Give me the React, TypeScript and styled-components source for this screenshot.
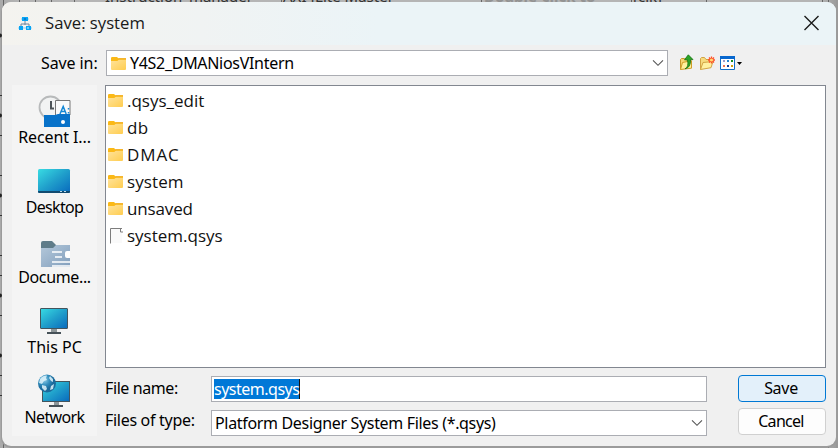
import React from 'react';
import styled, { createGlobalStyle } from 'styled-components';

const tahoma = '"Noto Sans", "DejaVu Sans", sans-serif';
const segoe = '"Open Sans", "Noto Sans", sans-serif';

const GlobalStyle = createGlobalStyle`
  * { box-sizing: border-box; }
  html, body { margin: 0; overflow: hidden; }
  svg { display: block; flex: none; }
`;

const Desktop = styled.div`
  position: relative;
  width: 838px;
  height: 448px;
  padding: 2px;
  overflow: hidden;
  background: linear-gradient(90deg, #a9a9a9 0, #b5b5b5 20px, #b5b5b5 820px, #999 100%);
`;
const Backdrop = styled.svg`
  position: absolute;
  left: 0;
  top: 0;
`;
const BackText = styled.span<{ $x: number; $faint?: boolean; $gap?: number }>`
  position: absolute;
  left: ${p => p.$x}px;
  top: -14px;
  font: ${p => (p.$faint ? 700 : 400)} 15px/20px ${tahoma};
  letter-spacing: ${p => p.$gap ?? 0}px;
  white-space: nowrap;
  color: ${p => (p.$faint ? '#929292' : '#333')};
`;
const Dialog = styled.main`
  position: relative;
  width: 834px;
  height: 444px;
  display: flex;
  flex-direction: column;
  overflow: hidden;
  border-radius: 9px;
  background: #f0f0f0;
  box-shadow: 0 1px 0 1px #9b9b9b;
`;
const TitleBar = styled.header`
  height: 43px;
  flex: none;
  display: flex;
  align-items: center;
  padding: 0 16px 0 15px;
  background: linear-gradient(90deg, #f4f3ef 0, #f0f3f3 24%, #ebf4f7 45%, #ebf4f7 100%);
`;
const Title = styled.h1`
  flex: 1;
  margin: 0 0 2px 12px;
  font: 400 16.7px/24px ${segoe};
  color: #191919;
`;
const LookIn = styled.div`
  height: 40px;
  flex: none;
  display: flex;
  align-items: flex-start;
  padding-top: 5px;
`;
const Text = styled.span<{ $gap?: number }>`
  font: 16px/22px ${tahoma};
  letter-spacing: ${p => p.$gap ?? 0}px;
  white-space: pre;
  color: #000;
`;
const LookLabel = styled.label`
  width: 104px;
  padding: 2px 0 0 39px;
  display: flex;
`;
const Field = styled.div<{ $width: number }>`
  width: ${p => p.$width}px;
  height: 26px;
  display: flex;
  align-items: center;
  border: 1px solid #abadb3;
  background: #fff;
`;
const Combo = styled(Field)<{ $inset: number }>`
  justify-content: space-between;
  padding: 0 3px 0 ${p => p.$inset}px;
`;
const ComboValue = styled.span`
  display: flex;
  align-items: center;
  gap: 4px;
`;
const Tools = styled.div`
  display: flex;
  align-items: center;
  height: 26px;
  margin-left: 11px;
  gap: 4px;
`;
const Content = styled.div`
  flex: 1;
  display: flex;
  align-items: flex-start;
`;
const Places = styled.nav`
  width: 85px;
  height: 351px;
  margin-left: 10px;
  background: #f4f4f4;
`;
const Place = styled.div`
  height: 70px;
  display: flex;
  flex-direction: column;
  align-items: center;
  padding-top: 9px;

  & > span { line-height: 20px; }
`;
const Main = styled.section`
  width: 722px;
  margin-left: 8px;
  display: flex;
  flex-direction: column;
`;
const FileList = styled.div`
  width: 721px;
  height: 283px;
  padding: 1px 0 0 2px;
  border: 1px solid #828790;
  background: #fff;
`;
const FileRow = styled.div`
  height: 27px;
  display: flex;
  align-items: center;
  gap: 4px;
`;
const FileName = styled.span<{ $gap?: number }>`
  font: 17px/25px ${segoe};
  letter-spacing: ${p => p.$gap ?? 0}px;
  color: #111;
`;
const Footer = styled.div`
  display: flex;
  justify-content: space-between;
  padding-top: 7px;
`;
const Fields = styled.div`
  display: flex;
  flex-direction: column;
  gap: 8px;
  padding-top: 1px;
`;
const FormRow = styled.div`
  display: flex;
`;
const FormLabel = styled.label<{ $lift?: boolean }>`
  width: 106px;
  height: 22px;
  padding-top: ${p => (p.$lift ? 0 : 1)}px;
  margin-top: ${p => (p.$lift ? -1 : 0)}px;
  display: flex;
`;
const Selected = styled.span`
  height: 20px;
  display: flex;
  align-items: center;
  margin-left: 2px;
  border-right: 1px solid #16120c;
  background: #0078d7;

  & > span { color: #fff; }
`;
const Buttons = styled.div`
  display: flex;
  flex-direction: column;
  gap: 6px;
  margin-right: 1px;
`;
const Button = styled.button<{ $primary?: boolean }>`
  width: 88px;
  height: 27px;
  display: flex;
  align-items: center;
  justify-content: center;
  padding: 0 2px 1px 0;
  border: 1px solid ${p => (p.$primary ? '#0078d4' : '#d0d0d0')};
  border-radius: 4px;
  background: ${p => (p.$primary ? '#e3f0fa' : '#fdfdfd')};
`;

const AppIcon = () => (
  <svg width="16" height="16" viewBox="0 0 16 16">
    <path d="M8 5v4M4 10V8h8v2" fill="none" stroke="#6f839b" />
    <path d="M4 3h1M11 3h1M1 12h14" stroke="#87cff5" />
    <path fill="#08a5f5" d="M5 1h6v4H5zM2 10h4v4H2zM9 10h5v4H9z" />
    <path fill="#087bd0" d="M7 2h2v2H7z" />
    <path fill="#65cbff" d="M10 11h2v2h-2z" />
  </svg>
);
const CloseIcon = () => (
  <svg width="16" height="18" viewBox="0 0 16 18">
    <path d="M.5 1l14 14M14.500 1l-14 14" stroke="#1b1b1b" strokeWidth="1.400" />
  </svg>
);
const Chevron = () => (
  <svg width="12" height="12" viewBox="0 0 12 12">
    <path d="M1 3.300l5 5 5-5" fill="none" stroke="#555" strokeWidth="1.100" />
  </svg>
);
const Folder = () => (
  <svg width="15" height="15" viewBox="0 0 15 15">
    <path fill="#fbb917" d="M0 2.200Q0 1 1.200 1H6l1.600 1.500H15V6H0z" />
    <path fill="#f1a910" d="M7.500 2.300H15v1.200H7z" />
    <path fill="url(#folderFront)" d="M0 5h6.300l1.500-1.300H15v9.400q0 .9-1 .9H1q-1 0-1-.9z" />
  </svg>
);
const FileIcon = () => (
  <svg width="15" height="16" viewBox="0 0 15 16">
    <path d="M2.500 15V.5h9l2.500 3V15" fill="#fafafa" />
    <path d="M2.500 15.500V.5H14M12.500 0v4H15" fill="none" stroke="#7d7d7d" />
  </svg>
);
const UpIcon = () => (
  <svg width="16" height="18" viewBox="0 0 16 18">
    <path d="M1.500 15.500V5.500l1-1h3l1.500 1.500H11V10" fill="#f6d774" stroke="#c7962b" />
    <path d="M1.500 15.500l2-7 9-1.800v7.500z" fill="#fff09c" stroke="#ce9d28" />
    <path d="M6 14.800q4-1.500 2.500-9H5.500L9.300.8l4.700 4.800h-2.500q.5 8-5.500 9.200z" fill="#2ba528" stroke="#16720f" strokeWidth=".8" />
  </svg>
);
const NewFolderIcon = () => (
  <svg width="17" height="18" viewBox="0 0 17 18">
    <path d="M1.500 15.500V4.500l1-1h3L7 5.500h5V9" fill="#f6db80" stroke="#d2a443" />
    <path d="M1.500 15.500l2.500-7 10-1-2 6.200z" fill="#fff0a0" stroke="#d2a443" />
    <path d="M12.500 2.500v7M9 6h7M10 3.500l5 5M15 3.500l-5 5" stroke="#ff4a24" strokeWidth="1.300" />
    <circle cx="12.500" cy="6" r="1.600" fill="#ffdc72" />
  </svg>
);
const ViewIcon = () => (
  <svg width="24" height="16" viewBox="0 0 24 16">
    <path fill="#fff" stroke="#126ec7" d="M.5 1.500h14v13H.5z" />
    <path fill="#0867ce" d="M0 1h15v3H0z" />
    <path fill="#9c9bcb" d="M3 5h2v2H3z" />
    <path fill="#2887cf" d="M7 5h2v2H7z" />
    <path fill="#148b20" d="M11 5h2v2h-2z" />
    <path fill="#ef744e" d="M3 10h2v2H3z" />
    <path fill="#133e98" d="M7 10h2v2H7z" />
    <path fill="#cd9e10" d="M11 10h2v2h-2z" />
    <path fill="#000" d="M17 7h5l-2.500 3z" />
  </svg>
);
const PlaceSvg = ({ children }: { children: React.ReactNode }) => (
  <svg width="33" height="33" viewBox="0 0 33 33">{children}</svg>
);
const RecentIcon = () => (
  <PlaceSvg>
    <circle cx="12.500" cy="13.500" r="11" fill="#f2f3f3" stroke="#b8babb" strokeWidth="1.800" />
    <path d="M13 7v7.500h3" fill="none" stroke="#4d5357" strokeWidth="2" />
    <path d="M17.500 21V6.500H32V21" fill="#fafafa" stroke="#777" />
    <path d="M22 20l3.200-7.500 3 7.500M23 17.500h4.500M30.500 14v1.500M30.500 18v1.500" fill="none" stroke="#1688d5" strokeWidth="1.500" />
    <path fill="#0872c9" d="M6 21h11l3-1h12v13H6z" />
    <circle cx="25" cy="28" r="2" fill="#fff" />
  </PlaceSvg>
);
const DesktopIcon = () => (
  <PlaceSvg>
    <rect y="5" width="32" height="24" rx="1.500" fill="url(#screen)" />
    <path d="M0 27h32v.5q0 1.500-1.500 1.500h-29Q0 29 0 27.500z" fill="#124b70" />
    <path d="M22 27.500h2M26 27.500h2" stroke="#bedbea" />
  </PlaceSvg>
);
const DocumentsIcon = () => (
  <PlaceSvg>
    <path d="M3 9q0-2 2-2h9l4 4h14v7H3z" fill="#5f7c89" />
    <path d="M3 14h12l3-3h14v22H3z" fill="url(#docs)" />
    <path d="M14 18h10M17 23h7M14 28h18M14 32h18" stroke="#fff" strokeWidth="1.600" />
    <path d="M32 17h-3q-2 0-2 2v3q0 2 2 2h3z" fill="#fff" />
  </PlaceSvg>
);
const PcIcon = () => (
  <PlaceSvg>
    <rect x="2.500" y="4.500" width="27" height="20" rx=".5" fill="url(#screen)" stroke="#43545d" />
    <path fill="#8e9699" d="M13 25h6v3.500h-6z" />
    <path fill="#465158" d="M9 28h14v2H9z" />
  </PlaceSvg>
);
const NetworkIcon = () => (
  <PlaceSvg>
    <rect x="4.500" y="7.500" width="27" height="20" fill="url(#screen)" stroke="#43545d" />
    <path fill="#8e9699" d="M16 28h5v3h-5z" />
    <path fill="#465158" d="M11 31h14v2H11z" />
    <circle cx="9" cy="9.500" r="9" fill="url(#globe)" />
    <path fill="#e0f5fb" opacity=".85" d="M2 5q3-4 7-3.500L8 4l1 2-3 1-2 3-3-1zM12 2l3 3v3l-2-1-2-3zM4 11l4 1 1 3-2 2-3-3zM13 12l3-2-1 5-3 1z" />
  </PlaceSvg>
);
const SharedGradients = () => (
  <defs>
    <linearGradient id="folderFront" x2="1" y2="1"><stop stopColor="#ffe39b" /><stop offset="1" stopColor="#ffcd50" /></linearGradient>
    <linearGradient id="screen" x2="1" y2="1"><stop stopColor="#38dce3" /><stop offset=".5" stopColor="#209fcb" /><stop offset="1" stopColor="#0869bd" /></linearGradient>
    <linearGradient id="docs" x2="1" y2="1"><stop stopColor="#b4c8da" /><stop offset="1" stopColor="#829fbd" /></linearGradient>
    <radialGradient id="globe" cx=".35" cy=".3"><stop stopColor="#92cfe8" /><stop offset=".6" stopColor="#318dbd" /><stop offset="1" stopColor="#1b6b9c" /></radialGradient>
  </defs>
);

const places = [
  { name: 'Recent I...', gap: -0.1, Icon: RecentIcon },
  { name: 'Desktop', gap: -0.65, Icon: DesktopIcon },
  { name: 'Docume...', gap: -0.35, Icon: DocumentsIcon },
  { name: 'This PC', gap: 0, Icon: PcIcon },
  { name: 'Network', gap: -0.65, Icon: NetworkIcon },
];
const files = [
  { name: '.qsys_edit', gap: 0 },
  { name: 'db', gap: 0.4 },
  { name: 'DMAC', gap: 0.9 },
  { name: 'system', gap: 0.1 },
  { name: 'unsaved', gap: -0.15 },
  { name: 'system.qsys', gap: 0, isFile: true },
];
const dots = [35, 115, 195, 295, 355];
const rules = [95, 135, 175, 215, 255, 275, 315, 375, 395];
const columns = [3, 19, 35, 51, 74, 281, 481, 631, 706, 822, 828];

export default function App() {
  return (
    <Desktop>
      <GlobalStyle />
      <Backdrop width="838" height="448">
        <SharedGradients />
        {columns.map(x => <path key={x} d={`M${x}.5 0v448`} stroke="#666" />)}
        <path d="M836.500 0v448" stroke="#999" />
      </Backdrop>
      <BackText $x={105}>Instruction_manager</BackText>
      <BackText $x={283}>AXI4Lite Master</BackText>
      <BackText $x={484} $faint>Double-click to</BackText>
      <BackText $x={633}>[clk]</BackText>
      <Dialog>
        <TitleBar><AppIcon /><Title>Save: system</Title><CloseIcon /></TitleBar>
        <LookIn>
          <LookLabel><Text $gap={-0.1}>Save in:</Text></LookLabel>
          <Combo $width={562} $inset={4}>
            <ComboValue><Folder /><Text $gap={-0.3}>Y4S2_DMANiosVIntern</Text></ComboValue>
            <Chevron />
          </Combo>
          <Tools><UpIcon /><NewFolderIcon /><ViewIcon /></Tools>
        </LookIn>
        <Content>
          <Places>
            {places.map(({ name, gap, Icon }) => (
              <Place key={name}><Icon /><Text $gap={gap}>{name}</Text></Place>
            ))}
          </Places>
          <Main>
            <FileList>
              {files.map(f => (
                <FileRow key={f.name}>{f.isFile ? <FileIcon /> : <Folder />}<FileName $gap={f.gap}>{f.name}</FileName></FileRow>
              ))}
            </FileList>
            <Footer>
              <Fields>
                <FormRow>
                  <FormLabel><Text $gap={-0.4}>File name:</Text></FormLabel>
                  <Field $width={496}><Selected><Text $gap={-0.5}>system.qsys</Text></Selected></Field>
                </FormRow>
                <FormRow>
                  <FormLabel $lift><Text $gap={-0.3}>Files of type:</Text></FormLabel>
                  <Combo $width={496} $inset={3}><Text $gap={-0.33}>Platform Designer System Files (*.qsys)</Text><Chevron /></Combo>
                </FormRow>
              </Fields>
              <Buttons>
                <Button $primary><Text $gap={-0.3}>Save</Text></Button>
                <Button><Text $gap={-0.7}>Cancel</Text></Button>
              </Buttons>
            </Footer>
          </Main>
        </Content>
      </Dialog>
      <Backdrop width="3" height="448">
        {rules.map(y => <path key={y} d={`M0 ${y}.5h2`} stroke="#333" />)}
        {dots.map(y => <circle key={y} cx="0" cy={y + 0.5} r="2" fill="#222" />)}
      </Backdrop>
    </Desktop>
  );
}
